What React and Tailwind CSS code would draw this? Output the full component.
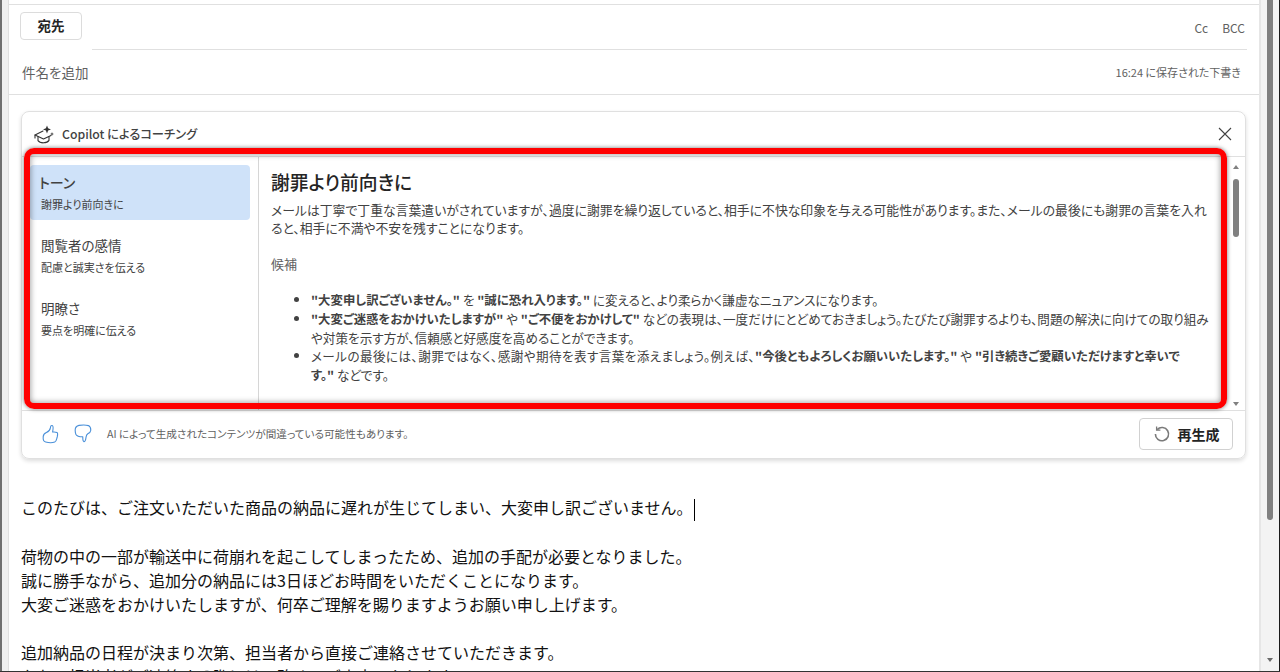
const F = '"Noto Sans CJK JP","Noto Sans",sans-serif';

function CoachIcon() {
  return (
    <svg width="20" height="20" viewBox="0 0 20 20" fill="none" stroke="#333333" strokeWidth="1.1" strokeLinejoin="round" strokeLinecap="round" className="mt-[1px]">
      <path d="M9 6 L1 10 L9.5 14 L17 10.4" />
      <path d="M4 11.6 V15.6 C6 18.6 13 18.6 15 15.4 V11.6" />
      <path d="M1 10 V13" />
      <path d="M13 0.4 L14.1 3.3 L17 4.4 L14.1 5.5 L13 8.4 L11.9 5.5 L9 4.4 L11.9 3.3 Z" fill="#333333" stroke="none" />
      <path d="M18 7 L18.5 8.5 L20 9 L18.5 9.5 L18 11 L17.5 9.5 L16 9 L17.5 8.5 Z" fill="#333333" stroke="none" />
    </svg>
  );
}

function ThumbUp() {
  return (
    <svg width="18" height="20" viewBox="0 0 18 20" fill="none" stroke="#4a90d9" strokeWidth="1.1" strokeLinejoin="round">
      <path d="M10.2 1.5 C8.8 1.2 8.6 2.6 8.4 3.8 C8 6 6.6 7.6 4.4 8.6 C2.6 9.4 1.4 10.4 1.2 12.6 C1 15 1.6 17.6 3.6 18 C6 18.6 10.6 18.8 12.8 18 C14.4 17.4 14.6 15 15.2 13 C15.6 11.4 16.2 9.2 15 8.4 C13.8 7.8 11.8 8 10.6 8 C11 6 11.8 2 10.2 1.5 Z" />
    </svg>
  );
}

function ThumbDown() {
  return (
    <svg width="18" height="20" viewBox="0 0 18 20" fill="none" stroke="#4a90d9" strokeWidth="1.1" strokeLinejoin="round">
      <path d="M1.2 6.6 C1 4 2.4 2 5 1.4 C8 0.9 12.4 1 14.4 1.6 C16.2 2.4 16.8 4.4 16.8 6.2 C16.6 8 15.4 9 13.8 9.8 C12.6 10.6 12.2 11.6 12 13.4 C11.8 15.4 11.2 18 9.8 17.6 C8.6 17.2 8.8 14.8 8.8 12.8 C6.6 12.8 3 12.6 1.8 10.2 C1.4 9 1.2 7.8 1.2 6.6 Z" />
    </svg>
  );
}

function Refresh() {
  return (
    <svg width="18" height="18" viewBox="0 0 18 18" fill="none" stroke="#7a7a7a" strokeWidth="1.6">
      <path d="M4.2 4.6 A6.6 6.6 0 1 1 2.4 9" />
      <path d="M3.6 1.4 V5.2 H7.4" strokeWidth="1.3" />
    </svg>
  );
}

function NavItem({ title, sub, active }) {
  return (
    <div className={active ? "h-[55px] rounded-[4px] bg-[#cfe2f9] pl-[9px] pt-[7px]" : "h-[55px] rounded-[4px] pl-[11px] pt-[7px]"}>
      <div className={active ? "text-[14px] font-medium leading-[20px] text-[#424242]" : "text-[13.5px] leading-[20px] text-[#424242]"}>{title}</div>
      <div className={active ? "mt-[3px] pl-[2px] text-[11px] leading-[18px] text-[#424242]" : "mt-[3px] text-[11px] leading-[18px] text-[#424242]"}>{sub}</div>
    </div>
  );
}

export default function App() {
  return (
    <div className="relative flex h-[672px] w-[1280px] overflow-hidden bg-white [font-feature-settings:'palt']" style={{ fontFamily: F }}>
      <div className="w-[9px] shrink-0 border-l-2 border-r border-l-[#707070] border-r-[#e0e0e0] bg-[#f0f0f0]" />
      <main className="flex h-[671px] min-w-0 flex-1 flex-col overflow-hidden border-r-2 border-[#e6e6e6] bg-white">
        <div className="h-[5px] shrink-0 border-b border-[#e0e0e0]" />
        <div className="flex h-[44px] shrink-0 items-start justify-between pr-[14px] pl-[11px] pt-[7px]">
          <div className="flex h-[28px] w-[62px] items-center justify-center rounded-[4px] border border-[#dcdcdc] pb-[2px] text-[13.5px] font-semibold text-[#242424]">宛先</div>
          <div className="flex gap-[14px] pt-[7px] text-[12px] leading-[18px] text-[#616161]">
            <span>Cc</span>
            <span>BCC</span>
          </div>
        </div>
        <div className="ml-[83px] mr-[12px] h-px shrink-0 bg-[#e0e0e0]" />
        <div className="flex h-[45px] shrink-0 items-center justify-between border-b border-[#e0e0e0] pr-[18px] pl-[13px]">
          <span className="text-[13.5px] text-[#616161]">件名を追加</span>
          <span className="text-[11px] text-[#616161]">16:24 に保存された下書き</span>
        </div>
        <div className="relative ml-[12px] mt-[16px] h-[348px] w-[1225px] shrink-0 rounded-[8px] border border-[#e0e0e0] shadow-[0_2px_4px_rgba(0,0,0,0.14)]">
          <div className="flex h-[45px] items-center justify-between border-b border-[#e0e0e0] pr-[13px] pl-[12px]">
            <div className="flex items-center gap-[8px]">
              <CoachIcon />
              <span className="text-[12.25px] font-medium text-[#424242]">Copilot によるコーチング</span>
            </div>
            <svg width="14" height="14" viewBox="0 0 14 14" stroke="#424242" strokeWidth="1.1">
              <path d="M1 1 L13 13 M13 1 L1 13" />
            </svg>
          </div>
          <div className="flex h-[254px] border-b border-[#e0e0e0]">
            <div className="flex w-[237px] shrink-0 flex-col gap-[8px] border-r border-[#d6d6d6] pt-[8px] pr-[8px] pl-[8px]">
              <NavItem title="トーン" sub="謝罪より前向きに" active />
              <NavItem title="閲覧者の感情" sub="配慮と誠実さを伝える" />
              <NavItem title="明瞭さ" sub="要点を明確に伝える" />
            </div>
            <div className="min-w-0 flex-1 overflow-hidden pt-[11px] pl-[12px] pr-[8px] text-[#424242]">
              <h2 className="text-[18.75px] font-medium leading-[28px] text-[#242424]">謝罪より前向きに</h2>
              <p className="mt-[5px] text-[12.85px] leading-[18px]">メールは丁寧で丁重な言葉遣いがされていますが、過度に謝罪を繰り返していると、相手に不快な印象を与える可能性があります。また、メールの最後にも謝罪の言葉を入れ<br />ると、相手に不満や不安を残すことになります。</p>
              <p className="mt-[18px] text-[13px] leading-[18px] text-[#616161]">候補</p>
              <ul className="mt-[18px] list-disc pl-[40px] text-[12.6px] leading-[18.75px]">
                <li><b className="text-[12.4px] font-semibold">"大変申し訳ございません。"</b> を <b className="text-[12.4px] font-semibold">"誠に恐れ入ります。"</b> に変えると、より柔らかく謙虚なニュアンスになります。</li>
                <li><b className="text-[12.4px] font-semibold">"大変ご迷惑をおかけいたしますが"</b> や <b className="text-[12.4px] font-semibold">"ご不便をおかけして"</b> などの表現は、一度だけにとどめておきましょう。たびたび謝罪するよりも、問題の解決に向けての取り組み<br />や対策を示す方が、信頼感と好感度を高めることができます。</li>
                <li><span className="[letter-spacing:0.4px]">メールの最後には、謝罪ではなく、感謝や期待を表す言葉を添えましょう。例えば、</span><b className="text-[12.4px] font-semibold">"今後ともよろしくお願いいたします。"</b> や <b className="text-[12.4px] font-semibold">"引き続きご愛顧いただけますと幸いで<br />す。"</b> などです。</li>
              </ul>
            </div>
            <div className="relative w-[16px] shrink-0 pt-[22px]">
              <div className="absolute left-[4px] top-[8px] h-0 w-0 border-x-[3px] border-b-[4px] border-x-transparent border-b-[#808080]" />
              <div className="ml-[4px] h-[58px] w-[6px] rounded-full bg-[#808080]" />
              <div className="absolute bottom-[4px] left-[4px] h-0 w-0 border-x-[3px] border-t-[4px] border-x-transparent border-t-[#808080]" />
            </div>
          </div>
          <div className="flex h-[46px] items-center justify-between pr-[12px] pl-[20px]">
            <div className="flex items-center">
              <ThumbUp />
              <div className="ml-[14px]"><ThumbDown /></div>
              <span className="ml-[15px] text-[10.6px] text-[#616161]">AI によって生成されたコンテンツが間違っている可能性もあります。</span>
            </div>
            <div className="flex h-[32px] w-[94px] items-center justify-center gap-[7px] rounded-[4px] border border-[#d1d1d1] text-[14px] font-semibold text-[#242424]">
              <Refresh />
              再生成
            </div>
          </div>
          <div className="pointer-events-none absolute top-[36px] left-[2px] h-[261px] w-[1203px] rounded-[10px] border-[6px] border-[#ff0000] shadow-[0_0_4px_rgba(0,0,0,0.55),inset_0_0_6px_rgba(0,0,0,0.45)]" />
        </div>
        <div className="mt-[36px] pl-[12px] text-[16px] leading-[24px] text-[#111111] [font-feature-settings:normal]">
          <p className="h-[24px]">このたびは、ご注文いただいた商品の納品に遅れが生じてしまい、大変申し訳ございません。<span className="ml-[1px] inline-block h-[22px] w-px bg-black align-middle" /></p>
          <p className="mt-[25px]">荷物の中の一部が輸送中に荷崩れを起こしてしまったため、追加の手配が必要となりました。</p>
          <p>誠に勝手ながら、追加分の納品には3日ほどお時間をいただくことになります。</p>
          <p>大変ご迷惑をおかけいたしますが、何卒ご理解を賜りますようお願い申し上げます。</p>
          <p className="mt-[24px]">追加納品の日程が決まり次第、担当者から直接ご連絡させていただきます。</p>
          <p>なお、担当者がご連絡する際には、改めてご案内いたします。</p>
        </div>
      </main>
      <div className="relative flex h-[671px] w-[19px] shrink-0 border-r border-[#1a1a1a] bg-[#f3f3f3] pl-[6px]">
        <div className="h-[520px] w-[6px] rounded-b-full bg-[#808080]" />
        <div className="absolute bottom-[9px] left-[6px] h-0 w-0 border-x-[3px] border-t-[4px] border-x-transparent border-t-[#6a6a6a]" />
      </div>
      <div className="absolute bottom-0 left-0 h-px w-[1280px] bg-[#333333]" />
    </div>
  );
}
